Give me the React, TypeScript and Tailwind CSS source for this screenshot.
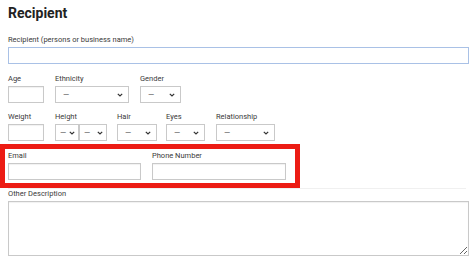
function Chevron() {
  return (
    <svg width="6" height="4" viewBox="0 0 6 4" className="shrink-0">
      <path d="M0.8 0.8 L3 3 L5.2 0.8" fill="none" stroke="#333" strokeWidth="1.2" />
    </svg>
  );
}

function Select({ w, tight }: { w: string; tight?: boolean }) {
  return (
    <div
      className={`${w} h-[17px] flex items-center justify-between ${tight ? "pl-[4px] pr-[3px]" : "pl-[7px] pr-[5px]"} border border-[#c9c9c9] bg-white text-[8px] leading-none text-[#444]`}
    >
      <span>—</span>
      <Chevron />
    </div>
  );
}

function Label({ children }: { children: React.ReactNode }) {
  return <div className="h-[10px] leading-[10px] text-[7.5px] text-[#3a3a3a] mb-[2px]">{children}</div>;
}

function Box({ w }: { w: string }) {
  return (
    <input className={`block ${w} h-[17px] border border-[#c9c9c9] shadow-[inset_0_1px_1px_rgba(0,0,0,0.06)] bg-white outline-none`} />
  );
}

export default function App() {
  return (
    <div className="w-[474px] h-[263px] bg-white overflow-hidden px-2 font-['Roboto',sans-serif]">
      <h1 className="pt-[3px] h-[23px] leading-[20px] text-[14px] font-bold text-[#222]">Recipient</h1>

      <div className="mt-[12px]">
        <Label>Recipient (persons or business name)</Label>
        <input className="block w-[461px] h-[17px] border border-[#a9c1e6] bg-white outline-none" />
      </div>

      {/* age / ethnicity / gender */}
      <div className="mt-[10px] flex">
        <div className="w-[47px]">
          <Label>Age</Label>
          <Box w="w-[36px]" />
        </div>
        <div className="w-[85px]">
          <Label>Ethnicity</Label>
          <Select w="w-[74px]" />
        </div>
        <div>
          <Label>Gender</Label>
          <Select w="w-[41px]" />
        </div>
      </div>

      {/* weight / height / hair / eyes / relationship */}
      <div className="mt-[9px] flex">
        <div className="w-[47px]">
          <Label>Weight</Label>
          <Box w="w-[36px]" />
        </div>
        <div className="w-[62px]">
          <Label>Height</Label>
          <div className="flex">
            <Select w="w-[24px]" tight />
            <Select w="w-[28px]" tight />
          </div>
        </div>
        <div className="w-[49px]">
          <Label>Hair</Label>
          <Select w="w-[40px]" />
        </div>
        <div className="w-[50px]">
          <Label>Eyes</Label>
          <Select w="w-[39px]" />
        </div>
        <div>
          <Label>Relationship</Label>
          <Select w="w-[59px]" />
        </div>
      </div>

      {/* highlighted contact row */}
      <div className="-ml-2 mt-[3px] w-[300px] h-[44px] border-[5px] border-[#ec1c14] pl-[3px] pt-[2px] flex">
        <div className="w-[144px]">
          <Label>Email</Label>
          <Box w="w-[133px]" />
        </div>
        <div>
          <Label>Phone Number</Label>
          <Box w="w-[134px]" />
        </div>
      </div>

      <div className="border-t border-[#f0f0f0]">
        <div className="h-[10px] leading-[10px] text-[7.5px] text-[#3a3a3a] mb-[2px]">Other Description</div>
        <textarea className="block w-[461px] h-[55px] border border-[#c9c9c9] shadow-[inset_0_1px_1px_rgba(0,0,0,0.06)] bg-white outline-none resize-y" />
      </div>
    </div>
  );
}
